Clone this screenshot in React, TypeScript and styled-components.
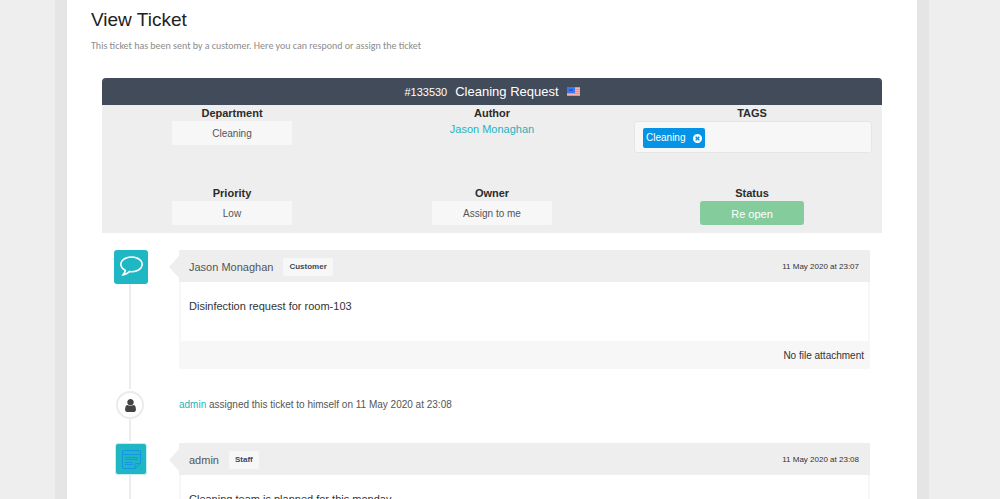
import React from 'react';
import styled, { createGlobalStyle } from 'styled-components';

const teal = '#20b7c5';
const grey = '#eeeeee';
const pale = '#f7f7f7';

const GlobalStyle = createGlobalStyle`
  * { box-sizing: border-box; }
  html { scrollbar-width: none; }
  body {
    margin: 0;
    background: ${grey};
    color: #333;
    font-family: "Liberation Sans", Arial, sans-serif;
    font-size: 11px;
    line-height: 16px;
  }
  button, input { font: inherit; color: inherit; }
  button { cursor: pointer; }
  svg { display: block; }
`;

const Shell = styled.div`
  margin: 0 71px 0 55px;
  padding: 0 12px;
  background: #e5e5e5;
`;

const Page = styled.main`
  min-height: 100vh;
  padding: 8px 35px 24px;
  background: #fff;
`;

const Intro = styled.header`
  margin: 0 -11px 24px;
`;

const Title = styled.h1`
  margin: 0;
  color: #222;
  font-size: 19px;
  font-weight: 400;
  line-height: 24px;
`;

const Subtitle = styled.p`
  margin: 6px 0 0;
  color: #8c8c8c;
  font-family: Carlito, Calibri, Lato, sans-serif;
  font-size: 10px;
`;

const Panel = styled.section`
  overflow: hidden;
  border-radius: 4px 4px 0 0;
  background: ${grey};
`;

const PanelHeader = styled.div`
  display: flex;
  align-items: center;
  justify-content: center;
  gap: 8px;
  height: 27px;
  background: #424b5a;
  color: #fff;
`;

const TicketName = styled.h2`
  margin: 0;
  font-size: 13px;
  font-weight: 400;
`;

const Fields = styled.div`
  display: grid;
  grid-template-columns: repeat(3, 1fr);
  row-gap: 32px;
  padding-bottom: 8px;
`;

const Field = styled.div`
  display: flex;
  flex-direction: column;
  align-items: center;
`;

const FieldLabel = styled.label`
  color: #2b2b2b;
  font-weight: 700;
`;

const Pill = styled.button<{ $tone?: 'green' }>`
  width: ${p => (p.$tone ? 104 : 120)}px;
  height: 24px;
  padding: 1px 0 0;
  border: 0;
  border-radius: ${p => (p.$tone ? 3 : 2)}px;
  background: ${p => (p.$tone ? '#84cc9c' : pale)};
  color: ${p => (p.$tone ? '#fff' : '#555')};
  font-size: ${p => (p.$tone ? 11 : 10)}px;
`;

const Link = styled.a`
  color: #24b4c0;
  text-decoration: none;
`;

const TagBox = styled.div`
  display: flex;
  align-items: center;
  align-self: stretch;
  height: 32px;
  margin: 0 10px 0 12px;
  padding: 2px 8px 0;
  border: 1px solid #e6e6e6;
  border-radius: 3px;
  background: ${pale};
`;

const Tag = styled.span`
  display: flex;
  align-items: center;
  gap: 8px;
  height: 20px;
  padding: 0 3px;
  border-radius: 2px;
  background: #0593e6;
  color: #fff;
  font-size: 10px;
`;

const RemoveTag = styled.button`
  padding: 0;
  border: 0;
  background: none;
`;

const TagInput = styled.input`
  flex: 1;
  min-width: 0;
  border: 0;
  outline: 0;
  background: none;
`;

const Timeline = styled.ol`
  margin: 17px 12px 0;
  padding: 0;
  list-style: none;
`;

const Entry = styled.li`
  display: grid;
  grid-template-columns: 34px 1fr;
  column-gap: 31px;
`;

const Rail = styled.div`
  display: flex;
  flex-direction: column;
  align-items: center;
`;

const Line = styled.span`
  flex: 1;
  width: 2px;
  margin: 0 2px 2px 0;
  background: #ececec;
`;

const Badge = styled.span<{ $staff?: boolean }>`
  display: flex;
  align-items: center;
  justify-content: center;
  width: ${p => (p.$staff ? 32 : 34)}px;
  height: ${p => (p.$staff ? 32 : 34)}px;
  padding-bottom: ${p => (p.$staff ? 0 : 2)}px;
  border: ${p => (p.$staff ? '1px solid #c9ecef' : '0')};
  border-radius: 3px;
  background: ${teal};
`;

const Avatar = styled.span`
  display: flex;
  align-items: center;
  justify-content: center;
  width: 28px;
  height: 28px;
  margin-right: 2px;
  border: 2px solid #ebebeb;
  border-radius: 50%;
  color: #444;
`;

const Message = styled.article`
  margin-bottom: 22px;
  background: ${pale};
`;

const MessageHeader = styled.header`
  position: relative;
  display: flex;
  align-items: center;
  gap: 10px;
  height: 32px;
  padding: 2px 11px 0 10px;
  background: ${grey};
  color: #555;

  &::before {
    content: '';
    position: absolute;
    top: 6px;
    left: -10px;
    border: solid transparent;
    border-width: 11px 10px 11px 0;
    border-right-color: ${grey};
  }
`;

const Role = styled.span`
  height: 18px;
  padding: 0 6px;
  border-radius: 2px;
  background: ${pale};
  color: #3e4756;
  font-size: 8px;
  font-weight: 700;
  line-height: 18px;
`;

const Time = styled.time`
  margin-left: auto;
  color: #333;
  font-size: 8px;
`;

const MessageBody = styled.p`
  height: 59px;
  margin: 0 2px;
  padding: 16px 8px;
  background: #fff;
`;

const MessageFooter = styled.footer`
  padding: 7px 6px 5px;
  text-align: right;
  font-size: 10px;
`;

const Activity = styled.p`
  margin: 6px 0 30px;
  color: #555;
  font-size: 10px;
`;

const Flag = () => (
  <svg width="13" height="9" viewBox="0 0 13 9" role="img" aria-label="United States">
    <rect width="13" height="9" fill="#f9b3ac" />
    <path d="M0 .5h13M0 2.500h13M0 4.500h13M0 6.500h13M0 8.500h13" stroke="#f08a84" />
    <rect width="8" height="6" fill="#3a78f0" />
    <path d="M2 2h4v2H2z" fill="#2459dc" />
  </svg>
);

const CommentIcon = () => (
  <svg width="23" height="20" viewBox="0 256 1792 1536" fill="#fff" aria-hidden="true">
    <path d="M896 384q-204 0-381.500 69.500t-282 187.500-104.500 255q0 112 71.500 213.500t201.500 175.500l87 50-27 96q-24 91-70 172 152-63 275-171l43-38 57 6q69 8 130 8 204 0 381.500-69.500t282-187.500 104.500-255-104.500-255-282-187.500-381.500-69.500zm896 512q0 174-120 321.500t-326 233-450 85.500q-70 0-145-8-198 175-460 242-49 14-114 22h-5q-15 0-27-10.500t-16-27.500v-1q-3-4-.5-12t2-10 4.500-9.500l6-9 7-8.500 8-9q7-8 31-34.500t34.500-38 31-39.500 32.500-51 27-59 26-76q-157-89-247.500-220t-90.500-281q0-174 120-321.500t326-233 450-85.500 450 85.500 326 233 120 321.500z" />
  </svg>
);

const UserIcon = () => (
  <svg width="11" height="13" viewBox="256 128 1280 1536" fill="currentColor" aria-hidden="true">
    <path d="M1536 1399q0 109-62.500 187t-150.500 78h-854q-88 0-150.500-78t-62.500-187q0-85 8.500-160.500t31.500-152 58.500-131 94-89 134.500-34.500q131 128 313 128t313-128q76 0 134.500 34.500t94 89 58.500 131 31.500 152 8.500 160.500zm-256-887q0 159-112.500 271.500t-271.500 112.500-271.500-112.500-112.500-271.500 112.500-271.500 271.500-112.500 271.500 112.500 112.500 271.500z" />
  </svg>
);

const CloseIcon = () => (
  <svg width="9" height="9" viewBox="128 128 1536 1536" fill="currentColor" aria-hidden="true">
    <path d="M1277 1122q0-26-19-45l-181-181 181-181q19-19 19-45 0-27-19-46l-90-90q-19-19-46-19-26 0-45 19l-181 181-181-181q-19-19-45-19-27 0-46 19l-90 90q-19 19-19 46 0 26 19 45l181 181-181 181q-19 19-19 45 0 27 19 46l90 90q19 19 46 19 26 0 45-19l181-181 181 181q19 19 45 19 27 0 46-19l90-90q19-19 19-46zm387-226q0 209-103 385.500t-279.500 279.500-385.500 103-385.500-103-279.500-279.500-103-385.500 103-385.500 279.500-279.500 385.500-103 385.500 103 279.500 279.500 103 385.500z" />
  </svg>
);

const NoteIcon = () => (
  <svg width="19" height="19" viewBox="0 0 19 19" fill="none" stroke="#1590ea" strokeWidth=".9" aria-hidden="true">
    <path d="M2 .5h15a1.500 1.500 0 0 1 1.500 1.500v11l-5.500 5.500H2A1.500 1.500 0 0 1 .5 17V2A1.500 1.500 0 0 1 2 .5zM.5 4.500h18M13 18.500V14.500a1 1 0 0 1 1-1h4.500M3 7.500h13M3 9.500h13M3 12.500h8M3 14.500h8" />
  </svg>
);

export default function App() {
  return (
    <>
      <GlobalStyle />
      <Shell>
        <Page>
          <Intro>
            <Title>View Ticket</Title>
            <Subtitle>This ticket has been sent by a customer. Here you can respond or assign the ticket</Subtitle>
          </Intro>

          <Panel>
            <PanelHeader>
              <span>#133530</span>
              <TicketName>Cleaning Request</TicketName>
              <Flag />
            </PanelHeader>
            <Fields>
              <Field>
                <FieldLabel htmlFor="department">Department</FieldLabel>
                <Pill id="department" type="button">Cleaning</Pill>
              </Field>
              <Field>
                <FieldLabel as="span">Author</FieldLabel>
                <Link href="#author">Jason Monaghan</Link>
              </Field>
              <Field>
                <FieldLabel htmlFor="tags">TAGS</FieldLabel>
                <TagBox>
                  <Tag>
                    Cleaning
                    <RemoveTag type="button" aria-label="Remove Cleaning"><CloseIcon /></RemoveTag>
                  </Tag>
                  <TagInput id="tags" type="text" />
                </TagBox>
              </Field>
              <Field>
                <FieldLabel htmlFor="priority">Priority</FieldLabel>
                <Pill id="priority" type="button">Low</Pill>
              </Field>
              <Field>
                <FieldLabel htmlFor="owner">Owner</FieldLabel>
                <Pill id="owner" type="button">Assign to me</Pill>
              </Field>
              <Field>
                <FieldLabel htmlFor="status">Status</FieldLabel>
                <Pill id="status" type="button" $tone="green">Re open</Pill>
              </Field>
            </Fields>
          </Panel>

          <Timeline>
            <Entry>
              <Rail>
                <Badge><CommentIcon /></Badge>
                <Line />
              </Rail>
              <Message>
                <MessageHeader>
                  <span>Jason Monaghan</span>
                  <Role>Customer</Role>
                  <Time dateTime="2020-05-11T23:07">11 May 2020 at 23:07</Time>
                </MessageHeader>
                <MessageBody>Disinfection request for room-103</MessageBody>
                <MessageFooter>No file attachment</MessageFooter>
              </Message>
            </Entry>
            <Entry>
              <Rail>
                <Avatar><UserIcon /></Avatar>
                <Line />
              </Rail>
              <Activity>
                <Link href="#admin">admin</Link> assigned this ticket to himself on 11 May 2020 at 23:08
              </Activity>
            </Entry>
            <Entry>
              <Rail>
                <Badge $staff><NoteIcon /></Badge>
                <Line />
              </Rail>
              <Message>
                <MessageHeader>
                  <span>admin</span>
                  <Role>Staff</Role>
                  <Time dateTime="2020-05-11T23:08">11 May 2020 at 23:08</Time>
                </MessageHeader>
                <MessageBody>Cleaning team is planned for this monday.</MessageBody>
              </Message>
            </Entry>
          </Timeline>
        </Page>
      </Shell>
    </>
  );
}
